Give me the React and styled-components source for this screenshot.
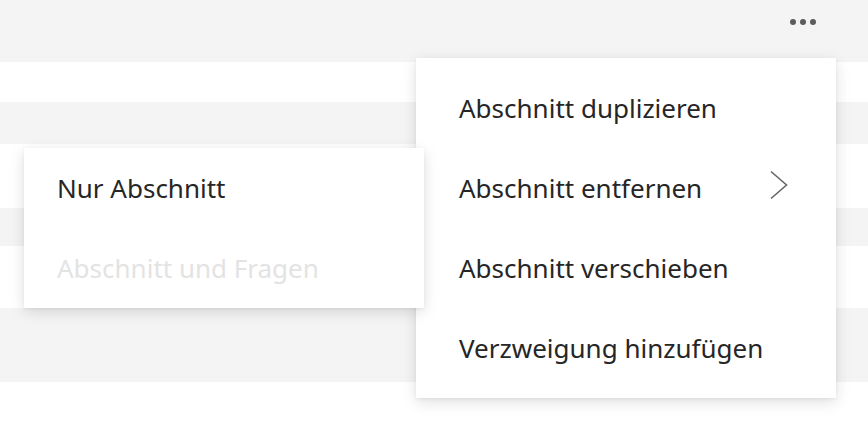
import React from "react";
import styled, { createGlobalStyle } from "styled-components";

const Global = createGlobalStyle`
  html, body { margin: 0; padding: 0; background: #ffffff; }
  body { font-family: "Noto Sans", "Open Sans", sans-serif; }
  #root { width: 868px; height: 444px; overflow: hidden; }
`;

const Page = styled.div`
  position: relative;
  width: 868px;
  height: 444px;
  display: flex;
  flex-direction: column;
  background: #ffffff;
`;

const Toolbar = styled.div`
  height: 62px;
  flex: none;
  background: #f4f4f4;
  display: flex;
  justify-content: flex-end;
  align-items: flex-start;
  padding-right: 48px;
`;

const MoreButton = styled.button`
  border: none;
  background: transparent;
  padding: 19px 4px;
  margin: 0;
  display: flex;
  gap: 4px;
  cursor: pointer;
`;

const Dot = styled.span`
  width: 6px;
  height: 6px;
  border-radius: 50%;
  background: #5c5c5c;
`;

const Band = styled.div`
  flex: none;
  height: ${(p) => p.$h}px;
  background: ${(p) => (p.$gray ? "#f4f4f4" : "#ffffff")};
`;

const Menu = styled.ul`
  position: absolute;
  left: ${(p) => p.$left}px;
  top: ${(p) => p.$top}px;
  width: ${(p) => p.$width}px;
  margin: 0;
  padding: ${(p) => p.$pad}px 0;
  list-style: none;
  background: #ffffff;
  box-shadow: 0 4px 14px rgba(0, 0, 0, 0.13), 0 1px 3px rgba(0, 0, 0, 0.06);
  z-index: ${(p) => p.$z};
`;

const Item = styled.li`
  height: 80px;
  display: flex;
  align-items: center;
  justify-content: space-between;
  padding-left: ${(p) => p.$indent}px;
  padding-right: 48px;
  font-size: 26px;
  color: ${(p) => (p.$disabled ? "#e3e3e3" : "#262626")};
  white-space: nowrap;
`;

const Chevron = () => (
  <svg width="18" height="30" viewBox="0 0 18 30" style={{ display: "block", marginTop: "-7px" }}>
    <path d="M1 1.5 L16.5 15 L1 28.5" fill="none" stroke="#666666" strokeWidth="1.6" />
  </svg>
);

export default function App() {
  return (
    <>
      <Global />
      <Page>
        <Toolbar>
          <MoreButton aria-label="Weitere Optionen">
            <Dot />
            <Dot />
            <Dot />
          </MoreButton>
        </Toolbar>
        <Band $h={40} />
        <Band $h={42} $gray />
        <Band $h={64} />
        <Band $h={38} $gray />
        <Band $h={62} />
        <Band $h={74} $gray />
        <Band $h={62} />

        <Menu $left={416} $top={58} $width={420} $pad={10} $z={1}>
          <Item $indent={43}>Abschnitt duplizieren</Item>
          <Item $indent={43}>
            Abschnitt entfernen
            <Chevron />
          </Item>
          <Item $indent={43}>Abschnitt verschieben</Item>
          <Item $indent={43}>Verzweigung hinzufügen</Item>
        </Menu>

        <Menu $left={24} $top={148} $width={400} $pad={0} $z={2}>
          <Item $indent={33}>Nur Abschnitt</Item>
          <Item $indent={33} $disabled>Abschnitt und Fragen</Item>
        </Menu>
      </Page>
    </>
  );
}
